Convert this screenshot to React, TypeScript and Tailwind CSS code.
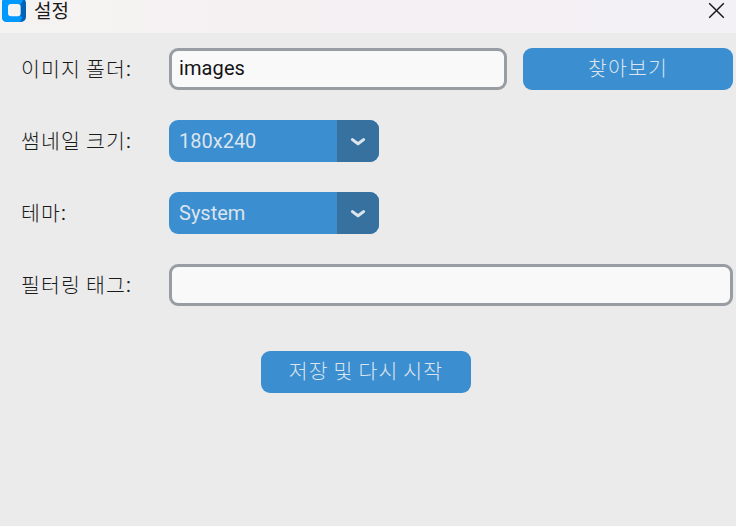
import type { ReactNode } from "react";

const FONT = "font-['Roboto','Noto_Sans_CJK_KR',sans-serif]";
const KOREAN = "font-['Noto_Sans_CJK_KR',sans-serif] font-light";

function Label({ children }: { children: ReactNode }) {
  return (
    <div className="flex w-[169px] shrink-0 items-center pb-[2px] pl-[21px]">
      <span className={`${KOREAN} whitespace-nowrap text-[20.5px] leading-[30px] tracking-[1.15px] [word-spacing:-0.8px] text-[#1a1a1a]`}>
        {children}
      </span>
      <span className="pt-px text-[20px] leading-[30px] text-[#1a1a1a]">:</span>
    </div>
  );
}

function Button({ children }: { children: ReactNode }) {
  return (
    <button className={`${KOREAN} flex h-[42px] w-[210px] shrink-0 items-center justify-center rounded-[9px] bg-[#3b8ed0] pb-[4px] text-[20.5px] leading-[30px] tracking-[1.15px] [word-spacing:-0.8px] text-[#dce4ee]`}>
      {children}
    </button>
  );
}

function OptionMenu({ value }: { value: string }) {
  return (
    <button className="flex h-[42px] w-[210px] overflow-hidden rounded-[9px] bg-[#3b8ed0] text-left text-[#dce4ee]">
      <span className="flex h-full w-[168px] items-center pl-[10px] text-[20px] leading-6">{value}</span>
      <span className="flex h-full w-[42px] items-center justify-center bg-[#36719f]">
        <svg className="mt-px" width="16" height="10" viewBox="0 0 16 10" fill="none" stroke="currentColor" strokeWidth="3" strokeLinecap="round" strokeLinejoin="round">
          <path d="M2.4 2.6 8 6.8 13.6 2.6" />
        </svg>
      </span>
    </button>
  );
}

export default function App() {
  return (
    <div className={`${FONT} h-[526px] w-[736px] overflow-hidden bg-[#ebebeb]`}>
      <header className="flex h-[33px] items-start justify-between bg-linear-to-r from-[#f5f3f2] via-[#f5f0f3] to-[#f3f1f6] pl-[2px] pr-[11px]">
        <div className="flex items-start">
          <svg width="24" height="22" viewBox="0 2 24 22">
            <rect width="24" height="24" rx="5" fill="#0062b8" />
            <path d="M5 0H20L21 3L18.5 6V18L20 20L18 24H5Q0 24 0 19V5Q0 0 5 0Z" fill="#0099ff" />
            <rect x="6" y="6" width="12.6" height="12.2" rx="3" fill="#f5f3f2" />
          </svg>
          <h1 className="ml-[8px] font-['Noto_Sans_CJK_KR',sans-serif] text-[19px] leading-[20px] font-normal text-[#1a1a1a]">설정</h1>
        </div>
        <button aria-label="닫기" className="mt-[2px]">
          <svg width="17" height="17" viewBox="0 0 17 17" stroke="#1a1a1a" strokeWidth="1.5">
            <path d="M1.2 1.2 15.8 15.8M15.8 1.2 1.2 15.8" />
          </svg>
        </button>
      </header>

      <main className="flex flex-col gap-[30px] pt-[15px]">
        <div className="flex h-[42px]">
          <Label>이미지 폴더</Label>
          <input defaultValue="images" className="mr-4 h-[42px] w-[338px] rounded-[9px] border-3 border-[#979da2] bg-[#f9f9fa] pb-[2px] pl-[7px] text-[20px] tracking-[0.1px] text-[#141414] outline-none" />
          <Button>찾아보기</Button>
        </div>
        <div className="flex h-[42px]">
          <Label>썸네일 크기</Label>
          <OptionMenu value="180x240" />
        </div>
        <div className="flex h-[42px]">
          <Label>테마</Label>
          <OptionMenu value="System" />
        </div>
        <div className="flex h-[42px]">
          <Label>필터링 태그</Label>
          <input className="h-[42px] w-[564px] rounded-[9px] border-3 border-[#979da2] bg-[#f9f9fa] px-[7px] text-[20px] outline-none" />
        </div>
      </main>

      <div className="mt-[45px] pl-[261px]">
        <Button>저장 및 다시 시작</Button>
      </div>
    </div>
  );
}
